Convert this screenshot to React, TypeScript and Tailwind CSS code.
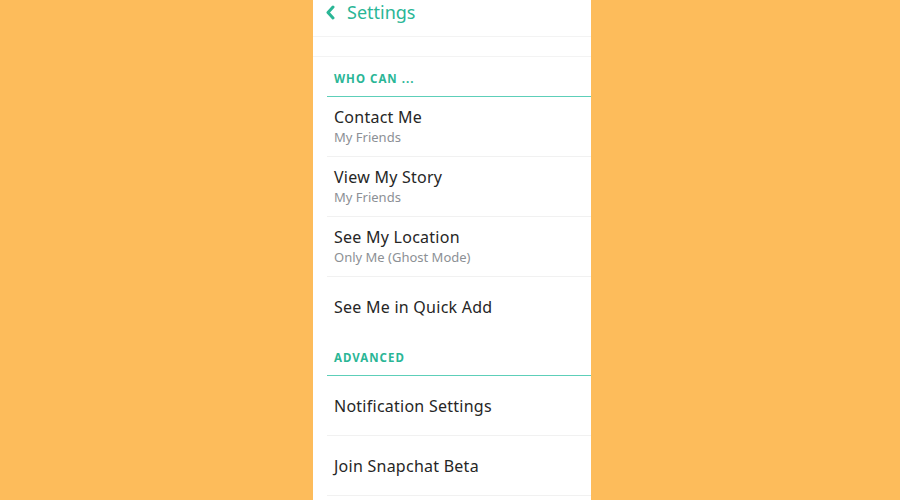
import React from "react";

type Row = { title: string; sub?: string; last?: boolean };

const whoCan: Row[] = [
  { title: "Contact Me", sub: "My Friends" },
  { title: "View My Story", sub: "My Friends" },
  { title: "See My Location", sub: "Only Me (Ghost Mode)" },
  { title: "See Me in Quick Add", last: true },
];

const advanced: Row[] = [
  { title: "Notification Settings" },
  { title: "Join Snapchat Beta" },
];

function SettingRow({ row }: { row: Row }) {
  return (
    <div
      className={
        row.last
          ? "ml-[14px] h-[60px] pl-[7px] flex flex-col justify-center"
          : "ml-[14px] h-[60px] border-b border-[#f1f1f1] pl-[7px] flex flex-col justify-center"
      }
    >
      <div className="text-[16px] leading-[20px] text-[#262626] tracking-[0.25px]">{row.title}</div>
      {row.sub && (
        <div className="text-[13px] leading-[18px] text-[#8c9095] mt-[1px]">{row.sub}</div>
      )}
    </div>
  );
}

function SectionHeader({ label, compact }: { label: string; compact?: boolean }) {
  return (
    <div
      className={
        compact
          ? "ml-[14px] h-[39px] border-b border-[#5dcfb9] pl-[7px] pt-[3px] flex items-center"
          : "ml-[14px] h-[40px] border-b border-[#5dcfb9] pl-[7px] pt-[4px] flex items-center"
      }
    >
      <span className="text-[11.5px] font-bold tracking-[1px] text-[#2ab696]">{label}</span>
    </div>
  );
}

export default function App() {
  return (
    <div
      className="w-[900px] h-[500px] bg-[#fdbc5b] flex justify-center overflow-hidden"
      style={{ fontFamily: '"Noto Sans", "Open Sans", sans-serif' }}
    >
      <div className="w-[278px] h-full bg-white ml-[4px] flex flex-col">
        <div className="h-[37px] border-b border-[#f3f3f3] flex items-center pl-[12px] pb-[12px]">
          <svg width="10" height="15" viewBox="0 0 10 15" className="mr-[12px]">
            <path d="M8 2 L3 7.5 L8 13" fill="none" stroke="#2ab696" strokeWidth="3" strokeLinecap="round" strokeLinejoin="round" />
          </svg>
          <span className="text-[18px] text-[#2ab696] leading-none">Settings</span>
        </div>
        <div className="h-[20px] border-b border-[#f3f3f3]" />
        <SectionHeader label="WHO CAN ..." />
        {whoCan.map((r) => (
          <SettingRow key={r.title} row={r} />
        ))}
        <SectionHeader label="ADVANCED" compact />
        {advanced.map((r) => (
          <SettingRow key={r.title} row={r} />
        ))}
      </div>
    </div>
  );
}
